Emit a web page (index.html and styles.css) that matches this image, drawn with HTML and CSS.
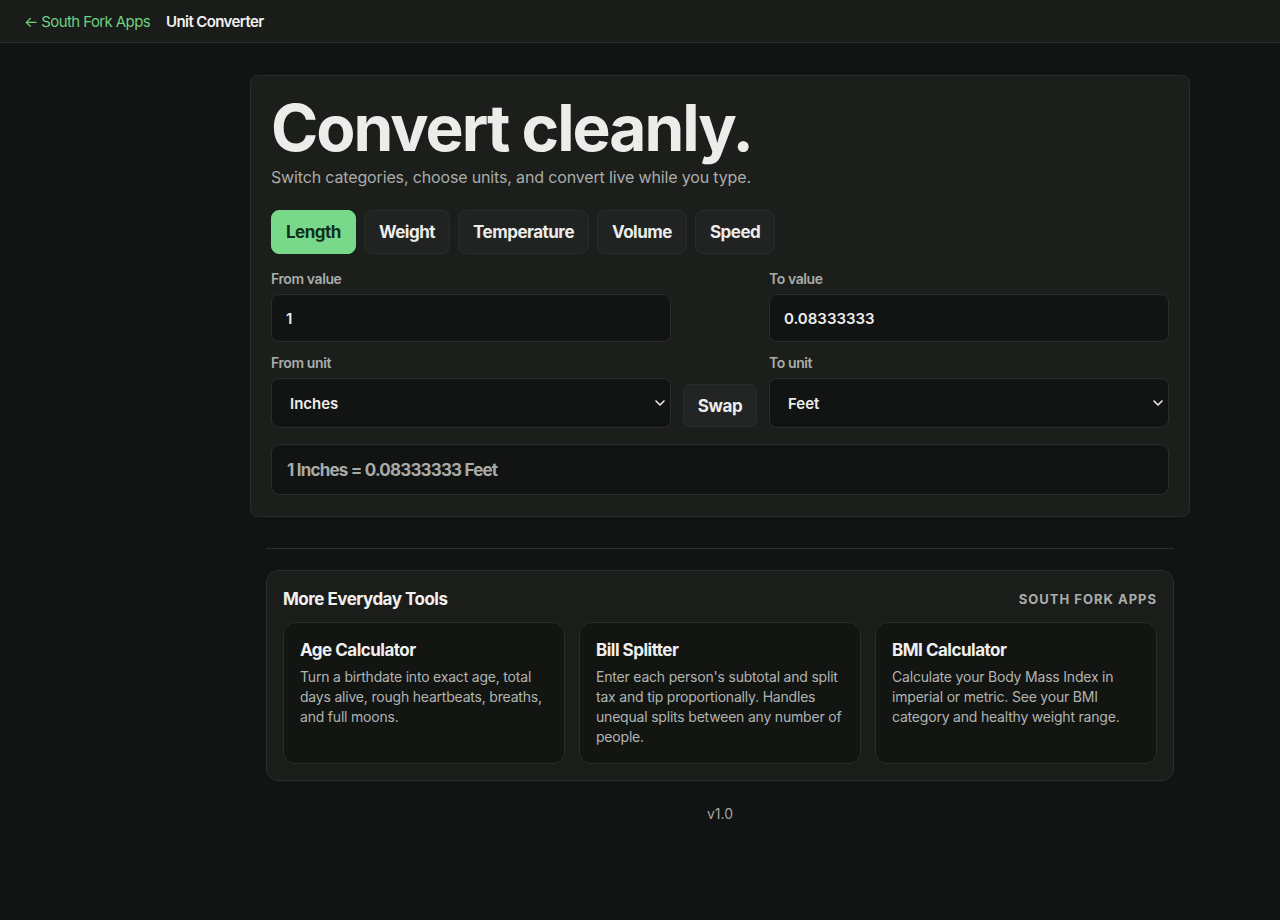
FILE: index.html
```html
<!DOCTYPE html>
<html lang="en">
<head>
    <meta charset="UTF-8">
    <meta name="viewport" content="width=device-width, initial-scale=1.0">
    <title>Unit Converter</title>
    <link rel="stylesheet" href="styles.css">
</head>
<body>
    <header class="topbar">
        <a class="back-link" href="#">&larr; South Fork Apps</a>
        <span class="app-name">Unit Converter</span>
    </header>

    <div class="page">
        <main class="content">
            <section class="converter">
                <h1>Convert cleanly.</h1>
                <p class="lead">Switch categories, choose units, and convert live while you type.</p>

                <div class="tabs">
                    <button class="tab active">Length</button>
                    <button class="tab">Weight</button>
                    <button class="tab">Temperature</button>
                    <button class="tab">Volume</button>
                    <button class="tab">Speed</button>
                </div>

                <div class="fields">
                    <div class="field">
                        <label for="fromValue">From value</label>
                        <input id="fromValue" type="text" value="1">
                    </div>
                    <div></div>
                    <div class="field">
                        <label for="toValue">To value</label>
                        <input id="toValue" type="text" value="0.08333333" readonly>
                    </div>

                    <div class="field">
                        <label for="fromUnit">From unit</label>
                        <select id="fromUnit">
                            <option>Inches</option>
                            <option>Feet</option>
                            <option>Yards</option>
                            <option>Meters</option>
                        </select>
                    </div>
                    <button class="swap-btn">Swap</button>
                    <div class="field">
                        <label for="toUnit">To unit</label>
                        <select id="toUnit">
                            <option>Feet</option>
                            <option>Inches</option>
                            <option>Yards</option>
                            <option>Meters</option>
                        </select>
                    </div>
                </div>

                <div class="result">1 Inches = 0.08333333 Feet</div>
            </section>

            <hr class="divider">

            <section class="more-tools">
                <div class="more-head">
                    <h2>More Everyday Tools</h2>
                    <span class="brand">South Fork Apps</span>
                </div>
                <div class="tool-grid">
                    <a class="tool-card" href="#">
                        <h3>Age Calculator</h3>
                        <p>Turn a birthdate into exact age, total days alive, rough heartbeats, breaths, and full moons.</p>
                    </a>
                    <a class="tool-card" href="#">
                        <h3>Bill Splitter</h3>
                        <p>Enter each person's subtotal and split tax and tip proportionally. Handles unequal splits between any number of people.</p>
                    </a>
                    <a class="tool-card" href="#">
                        <h3>BMI Calculator</h3>
                        <p>Calculate your Body Mass Index in imperial or metric. See your BMI category and healthy weight range.</p>
                    </a>
                </div>
            </section>

            <footer class="version">v1.0</footer>
        </main>
    </div>
</body>
</html>
```

FILE: styles.css
```css
* {
    box-sizing: border-box;
    margin: 0;
    padding: 0;
}
body {
    background: #121413;
    color: #ececea;
    font-family: Inter, "Noto Sans", sans-serif;
    min-height: 100vh;
}
.topbar {
    height: 43px;
    display: flex;
    align-items: center;
    gap: 16px;
    padding: 0 24px;
    background: #1a1c1a;
    border-bottom: 1px solid #2a2d2a;
    font-size: 15px;
}
.back-link {
    color: #6fd07f;
    text-decoration: none;
    letter-spacing: -0.6px;
}
.app-name {
    font-weight: 600;
    color: #f2f2f0;
    letter-spacing: -0.6px;
}
.page {
    padding-left: 160px;
}
.content {
    width: 940px;
    margin: 32px auto 0;
}
.converter {
    background: #1c1e1c;
    border: 1px solid #2a2d2a;
    border-radius: 8px;
    padding: 20px 20px 21px;
}
.converter h1 {
    font-size: 64px;
    font-weight: 700;
    letter-spacing: -2px;
    line-height: 1;
    color: #ececea;
}
.lead {
    margin-top: 7px;
    font-size: 16px;
    color: #a9ada9;
    letter-spacing: -0.15px;
}
.tabs {
    display: flex;
    gap: 8px;
    margin-top: 23px;
}
.tab {
    height: 44px;
    padding: 0 14px;
    border-radius: 8px;
    border: 1px solid #2a2d2a;
    background: #202321;
    color: #ececea;
    font-family: inherit;
    font-size: 17px;
    font-weight: 700;
    letter-spacing: -0.5px;
    cursor: pointer;
}
.tab.active {
    background: #78d98a;
    border-color: #78d98a;
    color: #10301a;
}
.fields {
    display: grid;
    grid-template-columns: 1fr 74px 1fr;
    column-gap: 12px;
    row-gap: 12px;
    margin-top: 16px;
    align-items: end;
}
.field label {
    display: block;
    font-size: 14px;
    font-weight: 600;
    color: #a9ada9;
    margin-bottom: 7px;
    letter-spacing: -0.4px;
}
.field input, .field select {
    width: 100%;
    height: 48px;
    background: #121413;
    border: 1px solid #2a2d2a;
    border-radius: 8px;
    color: #ececea;
    font-family: inherit;
    font-size: 15px;
    font-weight: 600;
    padding: 0 14px;
    outline: none;
}
.field select {
    height: 50px;
    padding: 0 14px 0 18px;
    appearance: none;
    background-image: url("data:image/svg+xml,%3Csvg xmlns='http://www.w3.org/2000/svg' width='10' height='6' viewBox='0 0 10 6'%3E%3Cpath d='M1 1l4 4 4-4' fill='none' stroke='%23ececea' stroke-width='1.6' stroke-linecap='round' stroke-linejoin='round'/%3E%3C/svg%3E");
    background-repeat: no-repeat;
    background-position: right 5px center;
}
.swap-btn {
    height: 43px;
    margin-bottom: 1px;
    border-radius: 8px;
    border: 1px solid #2a2d2a;
    background: #222523;
    color: #ececea;
    font-family: inherit;
    font-size: 17px;
    font-weight: 700;
    letter-spacing: -0.4px;
    cursor: pointer;
}
.result {
    margin-top: 16px;
    height: 51px;
    display: flex;
    align-items: center;
    padding: 0 15px;
    background: #121413;
    border: 1px solid #2a2d2a;
    border-radius: 8px;
    font-size: 17px;
    font-weight: 700;
    color: #a7aba7;
    letter-spacing: -0.8px;
}
.divider {
    border: none;
    border-top: 1px solid #2e312e;
    margin: 31px 16px 21px;
}
.more-tools {
    margin: 0 16px;
    background: #1b1d1b;
    border: 1px solid #2a2d2a;
    border-radius: 12px;
    padding: 16px;
}
.more-head {
    display: flex;
    justify-content: space-between;
    align-items: center;
    margin-bottom: 12px;
    height: 23px;
}
.more-head h2 {
    font-size: 17px;
    font-weight: 700;
    letter-spacing: -0.5px;
    color: #f0f0ee;
}
.brand {
    font-size: 13px;
    font-weight: 700;
    text-transform: uppercase;
    letter-spacing: 1px;
    color: #a9ada9;
}
.tool-grid {
    display: grid;
    grid-template-columns: repeat(3, 1fr);
    gap: 14px;
}
.tool-card {
    display: block;
    height: 142px;
    background: #131513;
    border: 1px solid #2a2d2a;
    border-radius: 12px;
    padding: 17px 16px 16px;
    text-decoration: none;
}
.tool-card h3 {
    font-size: 17px;
    font-weight: 700;
    letter-spacing: -0.5px;
    color: #f0f0ee;
    margin-bottom: 7px;
}
.tool-card p {
    font-size: 14px;
    line-height: 20px;
    color: #b0b4b0;
    letter-spacing: -0.2px;
}
.version {
    text-align: center;
    margin-top: 24px;
    font-size: 14px;
    color: #a0a4a0;
}
```
